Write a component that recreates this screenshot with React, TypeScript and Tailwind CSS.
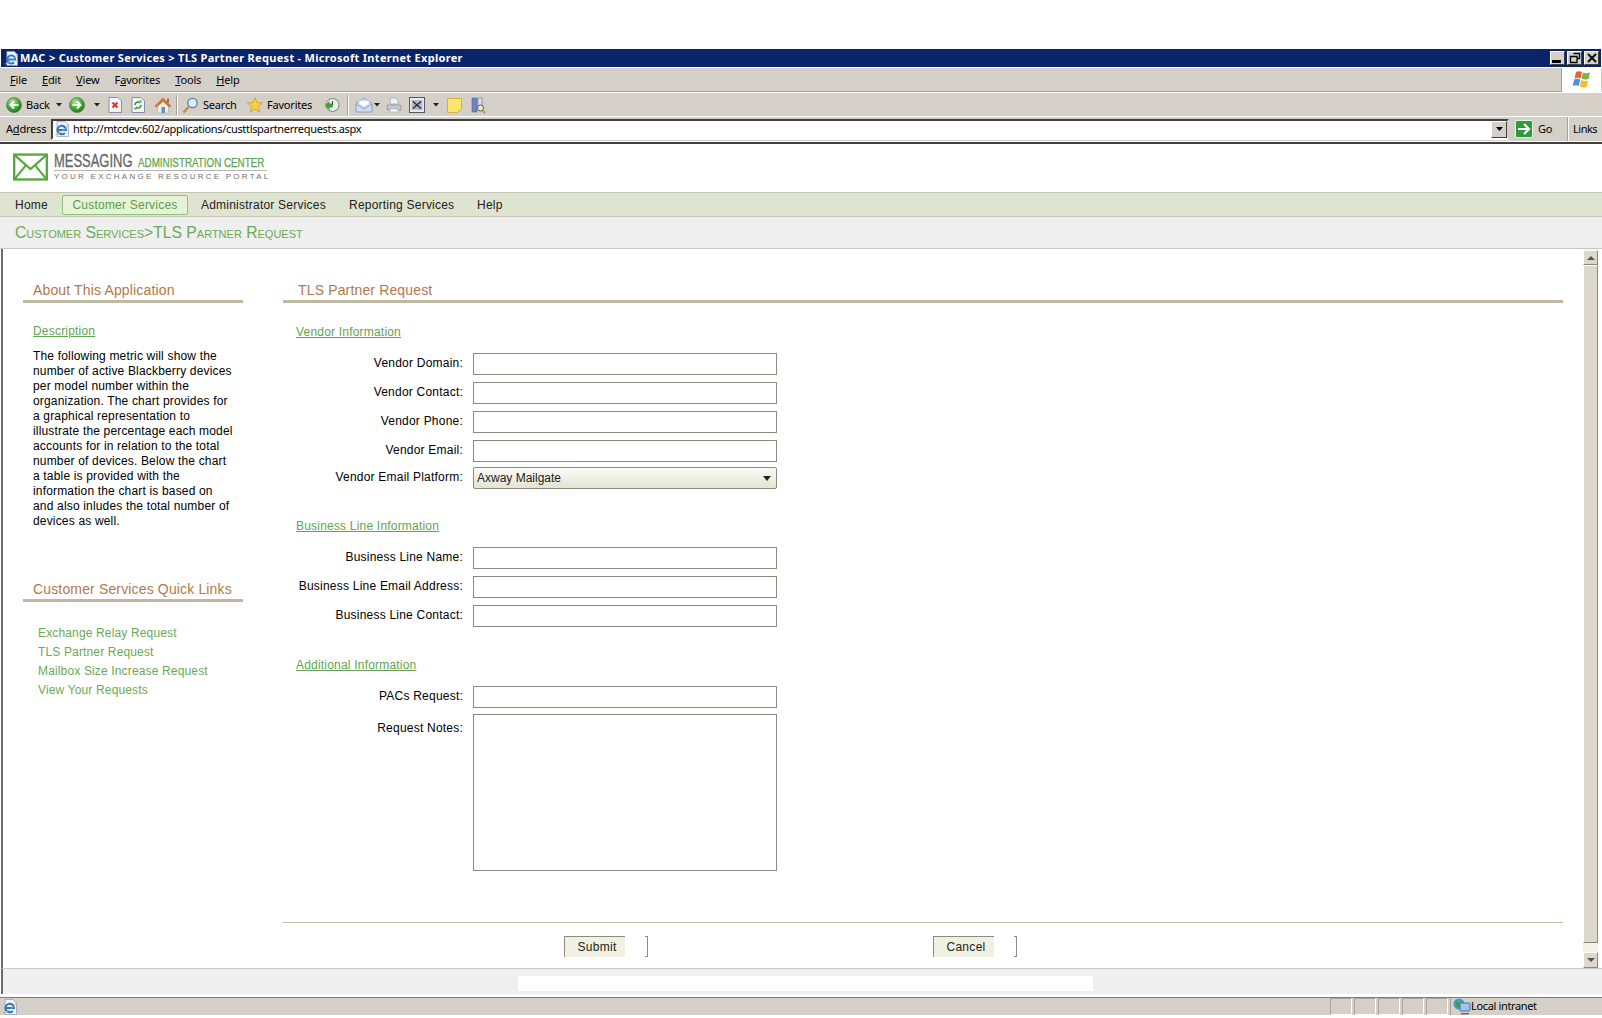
import React from "react";

const chrome = "[font-family:Noto_Sans,sans-serif]";
const body = "[font-family:Liberation_Sans,Arial,sans-serif]";

function Ball({ dir }: { dir: "l" | "r" }) {
  return (
    <svg width="16" height="16" viewBox="0 0 16 16" className="shrink-0 block">
      <defs>
        <radialGradient id={"b" + dir} cx="40%" cy="30%" r="75%">
          <stop offset="0" stopColor="#b8eb9a" />
          <stop offset="0.55" stopColor="#45a83a" />
          <stop offset="1" stopColor="#1d6f20" />
        </radialGradient>
      </defs>
      <circle cx="8" cy="8" r="7.5" fill={`url(#b${dir})`} stroke="#2f7d2a" strokeWidth="0.6" />
      <path d={dir === "l" ? "M12.5 8H5M8 4.5 4.5 8 8 11.5" : "M3.5 8H11M8 4.5 11.5 8 8 11.5"} stroke="#fff" strokeWidth="2" fill="none" />
    </svg>
  );
}

const Caret = () => (
  <svg width="6" height="4" viewBox="0 0 6 4" className="block shrink-0">
    <path d="M0 0h6L3 3.5z" fill="#222" />
  </svg>
);

const Stop = () => (
  <svg width="14" height="16" viewBox="0 0 14 16" className="block shrink-0">
    <path d="M1 .5h9l3.500 3.500v11.500H1z" fill="#f6f6fb" stroke="#8b8ca8" />
    <path d="M4.500 5.500l5 5M9.500 5.500l-5 5" stroke="#d8342a" strokeWidth="2" />
  </svg>
);
const Refresh = () => (
  <svg width="14" height="16" viewBox="0 0 14 16" className="block shrink-0">
    <path d="M1 .5h9l3.500 3.500v11.500H1z" fill="#f6f6fb" stroke="#8b8ca8" />
    <path d="M4 8a3 3 0 0 1 5-2.200M10 8a3 3 0 0 1-5 2.200" stroke="#2f9a34" strokeWidth="1.600" fill="none" />
    <path d="M8 3.500h2.500V6zM6 12.500H3.500V10z" fill="#2f9a34" />
  </svg>
);
const Home = () => (
  <svg width="18" height="17" viewBox="0 0 18 17" className="block shrink-0">
    <path d="M3.500 9.500 9 4.500l5.500 5V16h-11z" fill="#f1eee4" stroke="#a9a79c" strokeWidth="0.6" />
    <path d="M9 1 1 9l1.500 1L9 4l6.500 6L17 9z" fill="#d9772a" stroke="#a9551d" strokeWidth="0.5" />
    <rect x="7.500" y="10" width="3.500" height="6" fill="#5f93cf" />
    <rect x="13" y="1.500" width="2" height="4" fill="#b9603a" />
  </svg>
);
const SearchIco = () => (
  <svg width="17" height="17" viewBox="0 0 17 17" className="block shrink-0">
    <path d="M6.500 10 1.500 15.500" stroke="#c98a3a" strokeWidth="2.400" />
    <circle cx="10.500" cy="6" r="4.700" fill="#dcecf9" stroke="#4a7fb5" strokeWidth="1.300" />
  </svg>
);
const Star = () => (
  <svg width="16" height="16" viewBox="0 0 16 16" className="block shrink-0">
    <path d="M8 .5l2.200 5 5.300.5-4 3.600 1.200 5.400L8 12.200 3.300 15l1.200-5.400-4-3.600 5.300-.5z" fill="#f5d03e" stroke="#c7962a" strokeWidth="0.7" />
  </svg>
);
const History = () => (
  <svg width="16" height="16" viewBox="0 0 16 16" className="block shrink-0">
    <circle cx="8.500" cy="8" r="6.500" fill="#e8eef0" stroke="#6c8a78" />
    <path d="M8.500 4v4.500L6 10" stroke="#333" fill="none" />
    <path d="M1 8.500 5.500 4v2.500h3v4h-3V13z" fill="#3f9f3a" />
  </svg>
);
const Mail = () => (
  <svg width="18" height="16" viewBox="0 0 18 16" className="block shrink-0">
    <path d="M1 6.500 9 1l8 5.500V15H1z" fill="#cfdcf2" stroke="#7c8fb8" strokeWidth="0.8" />
    <path d="M4 7V3.500h10V7L9 10z" fill="#fff" stroke="#b5bdd0" strokeWidth="0.5" />
    <path d="M1 7l8 5 8-5" fill="none" stroke="#7c8fb8" strokeWidth="0.8" />
  </svg>
);
const Print = () => (
  <svg width="16" height="16" viewBox="0 0 16 16" className="block shrink-0">
    <path d="M4 1h7l1.500 6h-8z" fill="#f1f2f4" stroke="#a2a6ad" strokeWidth="0.7" />
    <path d="M1 8h13.500l.5 5H1.500z" fill="#c4c8cf" stroke="#8a8e96" strokeWidth="0.7" />
    <path d="M4 12h8v3H4z" fill="#fafafa" stroke="#a2a6ad" strokeWidth="0.6" />
  </svg>
);
const Edit = () => (
  <svg width="16" height="16" viewBox="0 0 16 16" className="block shrink-0">
    <rect x=".5" y=".5" width="15" height="15" fill="#eceaf0" stroke="#55586a" />
    <rect x="2.500" y="3" width="11" height="10" fill="#b6bac6" />
    <path d="M4 4.500l8 7M12 4.500l-8 7" stroke="#2c3040" strokeWidth="1.600" />
  </svg>
);
const Note = () => (
  <svg width="15" height="15" viewBox="0 0 15 15" className="block shrink-0">
    <path d="M.5.500h14v10l-4 4h-10z" fill="#fbe56f" stroke="#d1b23c" />
  </svg>
);
const Research = () => (
  <svg width="15" height="17" viewBox="0 0 15 17" className="block shrink-0">
    <rect x="1" y="1" width="5" height="14" fill="#6f84b8" stroke="#46588a" strokeWidth="0.5" />
    <rect x="7" y="1" width="4" height="9" fill="#d9dfee" stroke="#46588a" strokeWidth="0.5" />
    <circle cx="9.500" cy="11" r="3" fill="#f3e9b5" stroke="#58606f" />
    <path d="M11.500 13.500 14 16" stroke="#b58330" strokeWidth="1.500" />
  </svg>
);
const IEIcon = ({ s = 16 }: { s?: number }) => (
  <svg width={s} height={s} viewBox="0 0 16 16" className="block shrink-0">
    <path d="M3 .5h8l3.500 3.500v11.500H3z" fill="#eef2fa" stroke="#8d9abc" strokeWidth="0.7" />
    <path d="M3.700 9h8.300A4.300 4.300 0 1 0 10.800 12" fill="none" stroke="#2a78cc" strokeWidth="2" />
    <path d="M.8 13.500C2 15 12 9 14.500 3" stroke="#dfb43a" strokeWidth="0.9" fill="none" />
  </svg>
);
const Flag = () => (
  <svg width="21" height="20" viewBox="0 0 21 20" className="block">
    <path d="M5 2c2-1 4-1 6 0l-1.500 6.500c-2-1-4-1-6 0z" fill="#e8642c" />
    <path d="M12 2.500c2 1 4 1 7 0L17.500 9c-3 1-5 .5-7-.5z" fill="#7cb342" />
    <path d="M3.200 9.500c2-1 4-1 6 0L7.700 16c-2-1-4-1-6 0z" fill="#4f8fdc" />
    <path d="M10.200 10c2 1 4 1.500 7 .5L15.700 17c-3 1-5 .5-7-.5z" fill="#f2bf2e" />
  </svg>
);
const Local = () => (
  <svg width="18" height="17" viewBox="0 0 18 17" className="block shrink-0">
    <circle cx="6" cy="6" r="5.500" fill="#3f9fc0" />
    <path d="M2 3c2 0 3 2 5 3s-1 4-3 3z" fill="#3d9a3a" />
    <rect x="7" y="5" width="10" height="8" rx="1" fill="#9cc4ec" stroke="#4e6ea8" />
    <path d="M8 15h8v1.500H8z" fill="#4e6ea8" />
  </svg>
);

function Sep() {
  return <div className="w-[2px] h-[20px] border-l border-l-[#a5a29a] border-r border-r-white shrink-0" />;
}

function Title() {
  return (
    <div className="h-[18px] bg-[#0a246a] flex items-center pl-[3px] pr-[2px] mx-[1px]">
      <IEIcon s={15} />
      <span className={`${chrome} ml-[1px] pb-[1px] text-white font-bold text-[11px] leading-none whitespace-nowrap tracking-[0.3px]`}>
        MAC &gt; Customer Services &gt; TLS Partner Request - Microsoft Internet Explorer
      </span>
      <div className="ml-auto flex gap-[2px]">
        {[
          <div key="m" className="w-[9px] h-[3px] bg-black mt-[7px] -ml-[2px]" />,
          <svg key="r" width="12" height="12" viewBox="0 0 12 12" className="block"><path d="M4.500 1.500h6v5h-2M1.500 4.500h6.500v6h-6.500z" fill="none" stroke="#000" strokeWidth="1.300" /></svg>,
          <svg key="x" width="10" height="10" viewBox="0 0 10 10" className="block"><path d="M1 1l8 8M9 1l-8 8" stroke="#000" strokeWidth="1.800" /></svg>,
        ].map((c, i) => (
          <div key={i} className="w-[15px] h-[14px] bg-[#d4d0c8] border border-t-white border-l-white border-r-[#404040] border-b-[#404040] flex items-center justify-center overflow-hidden">
            {c}
          </div>
        ))}
      </div>
    </div>
  );
}

function Menu() {
  const items: [string, string, string][] = [
    ["", "F", "ile"],
    ["", "E", "dit"],
    ["", "V", "iew"],
    ["F", "a", "vorites"],
    ["", "T", "ools"],
    ["", "H", "elp"],
  ];
  return (
    <div className={`${chrome} h-[25px] mt-[1px] bg-[#d4d0c8] flex items-stretch border-b border-b-white text-[11px] text-black`}>
      <div className="flex items-center pl-[10px] pt-[1px] gap-[15px] flex-1 border-b border-b-[#a5a29a]">
        {items.map(([a, b, c]) => (
          <span key={b + c} className="whitespace-nowrap tracking-[-0.15px]">
            {a}<span className="underline">{b}</span>{c}
          </span>
        ))}
      </div>
      <div className="w-[40px] mr-[1px] bg-white border-l border-l-[#a5a29a] flex items-center justify-center">
        <Flag />
      </div>
    </div>
  );
}

function Toolbar() {
  return (
    <div className={`${chrome} h-[24px] pt-[1px] bg-[#d4d0c8] flex items-center pl-[6px] text-[11px] text-black border-b border-b-white tracking-[-0.2px]`}>
      <Ball dir="l" />
      <span className="ml-[4px] w-[23px]">Back</span>
      <span className="ml-[7px]"><Caret /></span>
      <span className="ml-[7px]"><Ball dir="r" /></span>
      <span className="ml-[9px]"><Caret /></span>
      <span className="ml-[8px]"><Stop /></span>
      <span className="ml-[9px]"><Refresh /></span>
      <span className="ml-[9px]"><Home /></span>
      <span className="ml-[4px]"><Sep /></span>
      <span className="ml-[4px]"><SearchIco /></span>
      <span className="ml-[4px] w-[32px]">Search</span>
      <span className="ml-[12px]"><Star /></span>
      <span className="ml-[4px] w-[46px]">Favorites</span>
      <span className="ml-[11px]"><History /></span>
      <span className="ml-[7px]"><Sep /></span>
      <span className="ml-[6px]"><Mail /></span>
      <span className="ml-[1px]"><Caret /></span>
      <span className="ml-[6px]"><Print /></span>
      <span className="ml-[7px]"><Edit /></span>
      <span className="ml-[8px]"><Caret /></span>
      <span className="ml-[8px]"><Note /></span>
      <span className="ml-[9px]"><Research /></span>
    </div>
  );
}

function AddressBar() {
  return (
    <div className={`${chrome} h-[24px] bg-[#d4d0c8] flex items-center text-[11px] text-black`}>
      <span className="ml-[6px] w-[45px] shrink-0 tracking-[-0.2px]">A<span className="underline">d</span>dress</span>
      <div className="w-[1458px] h-[21px] bg-white border-2 border-t-[#404040] border-l-[#404040] border-r-[#d4d0c8] border-b-white flex items-center shrink-0">
        <span className="ml-[1px]"><IEIcon /></span>
        <span className="ml-[3px] whitespace-nowrap tracking-[-0.32px]">http://mtcdev:602/applications/custtlspartnerrequests.aspx</span>
        <div className="ml-auto w-[16px] h-[17px] bg-[#d4d0c8] border border-t-white border-l-white border-r-[#404040] border-b-[#404040] flex items-center justify-center">
          <svg width="7" height="4" viewBox="0 0 7 4" className="block"><path d="M0 0h7L3.500 4z" fill="#000" /></svg>
        </div>
      </div>
      <div className="ml-[6px] w-[18px] h-[18px] rounded-[2px] bg-[#2f9a3a] border border-[#e5f5e0] flex items-center justify-center shrink-0">
        <svg width="14" height="12" viewBox="0 0 14 12" className="block"><path d="M1 6h10M7 1l5 5-5 5" fill="none" stroke="#fff" strokeWidth="2.200" /></svg>
      </div>
      <span className="ml-[5px] tracking-[-0.3px]">Go</span>
      <div className="ml-[15px] h-full w-[2px] border-l border-l-[#a5a29a] border-r border-r-white" />
      <span className="ml-[4px] tracking-[-0.5px]">Links</span>
    </div>
  );
}

function Logo() {
  return (
    <div className="h-[48px] bg-white flex items-center pl-[13px]">
      <svg width="35" height="30" viewBox="0 0 36 30" className="block shrink-0">
        <rect x="1.200" y="1.200" width="33.600" height="25.600" fill="#fff" stroke="#5aa63f" strokeWidth="2.400" />
        <path d="M2 2l16 14L34 2M2 26l11-13.500M34 26 23 12.500" fill="none" stroke="#5aa63f" strokeWidth="2.200" />
      </svg>
      <div className="ml-[6px] mb-[2px] flex flex-col">
        <div className="flex items-baseline whitespace-nowrap h-[19px] border-b border-b-[#b5b5b5] w-[213px]">
          <span className="inline-block origin-left scale-x-[0.72] [-webkit-text-stroke:0.35px_#666] text-[#666] text-[18px] leading-[18px] w-[84px]">MESSAGING</span>
          <span className="inline-block origin-left scale-x-[0.755] [-webkit-text-stroke:0.25px_#62a24a] text-[#62a24a] text-[13px] leading-[18px]">ADMINISTRATION CENTER</span>
        </div>
        <div className="text-[8px] leading-[12px] tracking-[2.250px] text-[#6f6f6f] whitespace-nowrap">
          YOUR EXCHANGE RESOURCE PORTAL
        </div>
      </div>
    </div>
  );
}

function Nav() {
  return (
    <div className="h-[25px] bg-[#dfe4d1] border-y border-y-[#c7c7b8] flex items-center text-[12px] tracking-[0.22px] text-[#222] pl-[15px]">
      <span className="w-[47px]">Home</span>
      <span className="w-[126px] h-[20px] flex items-center justify-center rounded-[2px] border border-[#8fc27b] bg-[#e6f3d8] text-[#5b9e45]">
        Customer Services
      </span>
      <span className="ml-[13px] w-[148px]">Administrator Services</span>
      <span className="w-[128px]">Reporting Services</span>
      <span>Help</span>
    </div>
  );
}

function Crumb() {
  return (
    <div className="h-[32px] pt-[1px] bg-[#efefef] border-b border-b-[#c8c8c8] flex items-center pl-[15px] text-[15.700px] text-[#69ab55] [font-variant:small-caps] whitespace-nowrap">
      Customer Services&gt;TLS Partner Request
    </div>
  );
}

function Heading({ children, className = "" }: { children: React.ReactNode; className?: string }) {
  return (
    <div className={`${className} h-[25px] pt-[2px] border-b-[3px] border-b-[#bdb89f] text-[14px] leading-[20px] text-[#b2784c] tracking-[0.15px]`}>
      {children}
    </div>
  );
}

const sectionLink = "underline text-[12px] leading-[14px] text-[#62a450] tracking-[0.2px]";

function Sidebar() {
  const links = ["Exchange Relay Request", "TLS Partner Request", "Mailbox Size Increase Request", "View Your Requests"];
  return (
    <div className="w-[220px] ml-[20px] pt-[29px] shrink-0">
      <Heading className="pl-[10px]">About This Application</Heading>
      <div className="pl-[10px] mt-[21px]">
        <div className={sectionLink}>Description</div>
        <p className="mt-[11px] text-[12px] leading-[15px] text-black tracking-[0.17px] whitespace-pre-line">
          {`The following metric will show the
number of active Blackberry devices
per model number within the
organization. The chart provides for
a graphical representation to
illustrate the percentage each model
accounts for in relation to the total
number of devices. Below the chart
a table is provided with the
information the chart is based on
and also inludes the total number of
devices as well.`}
        </p>
      </div>
      <Heading className="pl-[10px] mt-[48px]">Customer Services Quick Links</Heading>
      <div className="pl-[15px] mt-[22px] flex flex-col">
        {links.map((l) => (
          <span key={l} className="text-[12px] leading-[19px] text-[#6aa85a] tracking-[0.15px]">{l}</span>
        ))}
      </div>
    </div>
  );
}

function Row({ label, short, children }: { label: string; short?: boolean; children?: React.ReactNode }) {
  return (
    <div className={`flex items-start ${short ? "h-[27px]" : "h-[29px]"}`}>
      <label className="w-[167px] text-right text-[12px] leading-[20px] text-black tracking-[0.22px] whitespace-nowrap">{label}</label>
      <div className="ml-[10px]">
        {children ?? <input className="block w-[304px] h-[22px] bg-white border border-[#8b8b80] outline-none" />}
      </div>
    </div>
  );
}

function FootBtn({ label }: { label: string }) {
  return (
    <div className="flex items-center">
      <button className="w-[61px] h-[21px] pl-[4px] bg-[#f1f0e1] border-t border-l border-[#8b8b80] text-[12px] leading-none text-[#222] tracking-[0.3px]">
        {label}
      </button>
      <span className="ml-[20px] w-[3px] h-[21px] border-y border-r border-[#8b8b80] rounded-r-[1px]" />
    </div>
  );
}

function Scrollbar() {
  return (
    <div className="w-[15px] mr-[4px] h-full flex flex-col shrink-0 bg-[#f5f1e3] pt-[1px]">
      <div className="h-[15px] bg-[#dcd9cc] border border-t-white border-l-white border-r-[#8a8878] border-b-[#8a8878] flex items-center justify-center shrink-0">
        <svg width="8" height="4" viewBox="0 0 8 4" className="block"><path d="M0 4h8L4 0z" fill="#55554a" /></svg>
      </div>
      <div className="h-[678px] bg-[#dcd9cc] border border-t-white border-l-white border-r-[#8a8878] border-b-[#8a8878] shrink-0" />
      <div className="mt-auto h-[16px] bg-[#dcd9cc] border border-t-white border-l-white border-r-[#8a8878] border-b-[#8a8878] flex items-center justify-center shrink-0">
        <svg width="8" height="4" viewBox="0 0 8 4" className="block"><path d="M0 0h8L4 4z" fill="#55554a" /></svg>
      </div>
    </div>
  );
}

function Status() {
  return (
    <div className={`${chrome} h-[18px] bg-[#d4d0c8] border-t border-t-[#7f7d76] flex items-stretch text-[11px] text-black`}>
      <div className="flex items-center pl-[2px] w-[1328px] shrink-0"><IEIcon s={16} /></div>
      {[0, 1, 2, 3, 4].map((i) => (
        <div key={i} className="ml-[2px] w-[22px] border border-t-[#a5a29a] border-l-[#a5a29a] border-r-white border-b-white" />
      ))}
      <div className="ml-[2px] flex-1 border-l border-l-[#a5a29a] flex items-center pl-[2px]">
        <Local />
        <span className="whitespace-nowrap tracking-[-0.35px]">Local intranet</span>
      </div>
    </div>
  );
}

export default function App() {
  return (
    <div className={`${body} w-[1602px] h-[1018px] bg-white overflow-hidden flex flex-col`}>
      <div className="h-[49px] shrink-0" />
      <Title />
      <Menu />
      <Toolbar />
      <AddressBar />
      <div className="h-[2px] bg-[#404040] mt-[1px]" />
      <Logo />
      <Nav />
      <Crumb />
      <div className="h-[719px] ml-[1px] flex border-l-2 border-l-[#6a6a6a]">
        <Sidebar />
        <div className="flex-1 pt-[29px] min-w-0 ml-[40px] mr-[20px]">
          <Heading className="pl-[15px]">TLS Partner Request</Heading>
          <div className="pl-[13px] h-[619px]">
            <div className={`${sectionLink} pt-[22px]`}>Vendor Information</div>
            <div className="mt-[14px]">
              <Row label="Vendor Domain:" />
              <Row label="Vendor Contact:" />
              <Row label="Vendor Phone:" />
              <Row label="Vendor Email:" short />
              <Row label="Vendor Email Platform:">
                <div className="w-[304px] h-[22px] rounded-[2px] border border-[#8b8b80] bg-gradient-to-b from-[#fbfbf6] to-[#e4e4d2] flex items-center justify-between px-[3px] text-[12px] text-[#222]">
                  <span>Axway Mailgate</span>
                  <svg width="8" height="5" viewBox="0 0 8 5" className="block mr-[2px]"><path d="M0 0h8L4 5z" fill="#222" /></svg>
                </div>
              </Row>
            </div>
            <div className={`${sectionLink} pt-[23px]`}>Business Line Information</div>
            <div className="mt-[14px]">
              <Row label="Business Line Name:" />
              <Row label="Business Line Email Address:" />
              <Row label="Business Line Contact:" />
            </div>
            <div className={`${sectionLink} pt-[24px]`}>Additional Information</div>
            <div className="mt-[14px]">
              <Row label="PACs Request:" short />
              <div className="flex items-start pt-[1px]">
                <label className="w-[167px] pt-[4px] text-right text-[12px] leading-[20px] text-black tracking-[0.22px]">Request Notes:</label>
                <textarea className="block ml-[10px] w-[304px] h-[157px] bg-white border border-[#8b8b80] outline-none resize-none" />
              </div>
            </div>
          </div>
          <div className="border-t border-t-[#c4bfa8] pt-[13px] flex pl-[281px] gap-[285px]">
            <FootBtn label="Submit" />
            <FootBtn label="Cancel" />
          </div>
        </div>
        <Scrollbar />
      </div>
      <div className="h-[26px] ml-[1px] bg-[#efefef] border-t border-t-[#c8c8c8] border-l-2 border-l-[#6a6a6a] flex items-start shrink-0">
        <div className="ml-[515px] mt-[7px] w-[575px] h-[15px] bg-white" />
      </div>
      <div className="h-[3px] bg-white shrink-0" />
      <Status />
    </div>
  );
}
